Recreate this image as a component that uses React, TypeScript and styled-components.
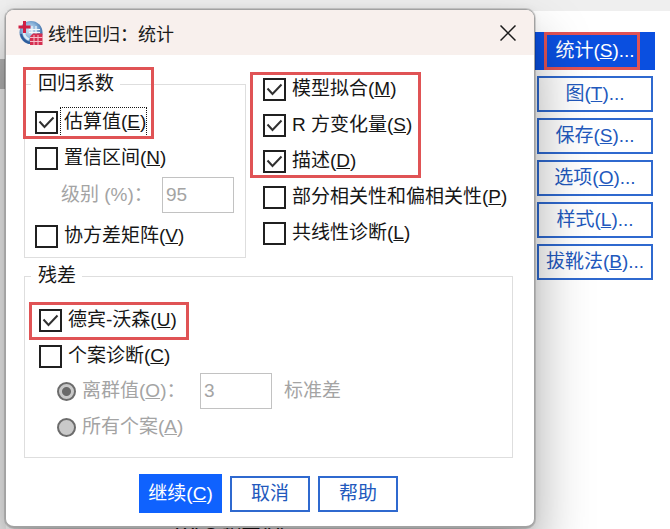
import React, { useState } from "react";
import styled, { createGlobalStyle, css } from "styled-components";

const GlobalStyle = createGlobalStyle`
  *, *::before, *::after { box-sizing: border-box; }
  body {
    margin: 0;
    overflow: hidden;
    background: #ffffff;
    color: #161616;
    font-family: "Liberation Sans", "Noto Sans CJK SC", sans-serif;
    font-size: 19px;
    line-height: 22px;
  }
  button, input { font: inherit; }
`;

const Page = styled.div`
  min-height: 100vh;
  display: grid;
  grid-template-columns: minmax(0, 1fr) 135px;
  grid-template-rows: auto 1fr;
  padding: 9px 0 0 5px;
  overflow: hidden;
  background:
    linear-gradient(#b4b4b4, #b4b4b4) 0 59px / 6px 30px no-repeat,
    linear-gradient(#f0f0f0, #f0f0f0) 0 0 / 6px 100% no-repeat,
    linear-gradient(#efefef 0 11px, #ffffff 11px);
`;

const Dialog = styled.div`
  position: relative;
  z-index: 1;
  border: 1px solid #a2a2a2;
  border-bottom-width: 2px;
  border-radius: 9px;
  background: #ffffff;
  box-shadow: 0 0 0 1px rgba(0, 0, 0, 0.14), 0 32px 56px rgba(0, 0, 0, 0.36),
    0 0 8px rgba(0, 0, 0, 0.06);
`;

const TitleBar = styled.header`
  display: flex;
  align-items: center;
  height: 45px;
  padding: 0 13px 0 12px;
  border-radius: 8px 8px 0 0;
  background: #f8f0ed;
`;

const Title = styled.h1`
  flex: 1;
  margin: 0 0 0 5px;
  font-size: 18px;
  font-weight: 400;
  line-height: 24px;
  color: #1a1a1a;
  font-family: "Noto Sans CJK SC", sans-serif;
`;

const CloseButton = styled.button`
  display: grid;
  place-items: center;
  width: 26px;
  height: 26px;
  padding: 0;
  border: 0;
  background: transparent;
`;

const Body = styled.form`
  padding: 16px 21px 13px 18px;
`;

const Columns = styled.div`
  display: grid;
  grid-template-columns: minmax(0, 222fr) minmax(0, 250fr);
  gap: 17px;
  align-items: start;
`;

const Group = styled.fieldset<{ $spaced?: boolean }>`
  min-width: 0;
  margin: ${(p) => (p.$spaced ? "7px 0 0" : "2px 0 0")};
  padding: 0 10px ${(p) => (p.$spaced ? "12px" : "3px")};
  border: 1px solid #dedede;
`;

const Legend = styled.legend`
  margin-left: -4px;
  padding: 0 6px 0 7px;
`;

const Stack = styled.div<{ $row: number; $top?: number; $left?: number }>`
  display: grid;
  grid-auto-rows: ${(p) => p.$row}px;
  padding-top: ${(p) => p.$top ?? 0}px;
  padding-left: ${(p) => p.$left ?? 0}px;
`;

const Row = styled.div<{ $indent?: number }>`
  display: flex;
  align-items: center;
  height: 36px;
  padding-left: ${(p) => p.$indent ?? 0}px;
  white-space: nowrap;
`;

const Marked = styled.div`
  position: relative;
`;

const frames = {
  coefficients: "-37px 81px 1px -12px",
  fit: "1px 92px 1px -13px",
  durbin: "-3px 313px -1px -10px",
  stats: "0 15px 0 9px",
};

const Frame = styled.span<{ $area: keyof typeof frames }>`
  position: absolute;
  inset: ${(p) => frames[p.$area]};
  border: 3px solid #e05355;
  pointer-events: none;
`;

const CheckLabel = styled.label`
  display: flex;
  align-items: center;
  gap: 2px;
  white-space: nowrap;
`;

const BoxCell = styled.span`
  display: grid;
  width: 23px;
  height: 23px;
  > * {
    grid-area: 1 / 1;
  }
`;

const CheckInput = styled.input`
  appearance: none;
  width: 23px;
  height: 23px;
  margin: 0;
  border: 2px solid #202020;
  background: #ffffff;
  outline: none;
`;

const Caption = styled.span<{ $dotted?: boolean }>`
  padding: 3px 0 3px 3px;
  border: 1px dotted ${(p) => (p.$dotted ? "#161616" : "transparent")};
`;

const RadioLabel = styled.label`
  display: flex;
  align-items: center;
  gap: 6px;
  color: #a4a4a4;
`;

const RadioInput = styled.input`
  appearance: none;
  width: 19px;
  height: 19px;
  margin: 0;
  border: 2px solid #6c6c6c;
  border-radius: 50%;
  background: #c9c9c9;
  &:checked {
    background: radial-gradient(circle, #6a6a6a 0 4px, #c9c9c9 5px);
  }
`;

const Muted = styled.label`
  color: #a4a4a4;
`;

const NumberBox = styled.input`
  width: 72px;
  height: 36px;
  padding: 0 3px;
  border: 1px solid #c2c2c2;
  border-radius: 0;
  background: #ffffff;
  color: #a4a4a4;
`;

const Level = styled(Row)`
  justify-content: space-between;
  height: 38px;
  padding: 0 1px 0 26px;
  margin-bottom: 4px;
`;

const Deviation = styled.div`
  display: flex;
  align-items: center;
  gap: 12px;
`;

const OutlierRow = styled(Row)`
  display: grid;
  grid-template-columns: 143px 1fr;
`;

const Footer = styled.footer`
  display: flex;
  align-items: center;
  justify-content: center;
  gap: 8px;
  margin-top: 16px;
`;

const ActionButton = styled.button<{ $primary?: boolean }>`
  width: 80px;
  height: 36px;
  padding: 0;
  border: 2px solid #2f69cf;
  background: #ffffff;
  color: #2259bd;
  white-space: nowrap;
  ${(p) =>
    p.$primary &&
    css`
      width: 83px;
      height: 39px;
      border-color: #0f62fe;
      background: #0f62fe;
      color: #ffffff;
    `}
`;

const Side = styled.aside`
  display: flex;
  flex-direction: column;
  gap: 6px;
  padding: 23px 15px 0 0;
`;

const SideButton = styled(ActionButton)`
  width: auto;
  margin: 0 2px;
`;

const ActiveSlot = styled(Marked)`
  display: grid;
`;

const ActiveButton = styled(SideButton)`
  height: 38px;
  margin: 0;
  border-color: #0a4fe0;
  background: #0a4fe0;
  color: #ffffff;
`;

const Beneath = styled.div`
  height: 2px;
  padding-left: 171px;
  line-height: 14px;
  white-space: nowrap;
`;

type Entry = { text: string; hotkey: string };

const Key = ({ text, hotkey }: Entry) => (
  <>
    {text}(<u>{hotkey}</u>)
  </>
);

function Check({
  text,
  hotkey,
  initial = false,
  dotted = false,
}: Entry & { initial?: boolean; dotted?: boolean }) {
  const [on, setOn] = useState(initial);
  return (
    <CheckLabel>
      <BoxCell>
        <CheckInput type="checkbox" checked={on} onChange={() => setOn(!on)} />
        {on && (
          <svg width="23" height="23" viewBox="0 0 23 23" fill="none" pointerEvents="none">
            <path d="M4.5 10.5 9.5 16 18.5 6.5" stroke="#303030" strokeWidth="2" />
          </svg>
        )}
      </BoxCell>
      <Caption $dotted={dotted}>
        <Key text={text} hotkey={hotkey} />
      </Caption>
    </CheckLabel>
  );
}

const AppIcon = () => (
  <svg width="25" height="26" viewBox="0 0 25 26" aria-hidden="true">
    <defs>
      <radialGradient id="globe" cx="0.45" cy="0.4" r="0.6">
        <stop offset="0" stopColor="#d6e8f5" />
        <stop offset="0.55" stopColor="#86b0d8" />
        <stop offset="1" stopColor="#34649f" />
      </radialGradient>
    </defs>
    <circle cx="13" cy="12.5" r="11.5" fill="url(#globe)" />
    <path d="M11 9.500h11M11 12.500h11M14 6v8M18 6v8" stroke="#f2f8fc" strokeWidth="1.2" />
    <path d="M3 14q2 7.500 9 9" stroke="#2d5c9c" strokeWidth="2" fill="none" />
    <path d="M6 12.500q0 5 5 7" stroke="#dcebf6" strokeWidth="2.500" fill="none" />
    <path d="M6.500 1v12M0.500 7h12" stroke="#cf1f42" strokeWidth="3" />
    <path d="M12 16.500l3-3h9.500V25H12z" fill="#d52f50" />
    <path d="M12 17.500h12.500M12 21.500h12.500M16 15v10M20 15v10" stroke="#f6bcc8" strokeWidth="1" />
  </svg>
);

const sideItems: Entry[] = [
  { text: "图", hotkey: "T" },
  { text: "保存", hotkey: "S" },
  { text: "选项", hotkey: "O" },
  { text: "样式", hotkey: "L" },
  { text: "拔靴法", hotkey: "B" },
];

export default function App() {
  const [level, setLevel] = useState("95");
  const [deviations, setDeviations] = useState("3");
  return (
    <>
      <GlobalStyle />
      <Page>
        <Dialog role="dialog" aria-labelledby="title">
          <TitleBar>
            <AppIcon />
            <Title id="title">线性回归：统计</Title>
            <CloseButton type="button" aria-label="关闭">
              <svg width="16" height="16" viewBox="0 0 16 16">
                <path d="M.5.5l15 15M15.500.5l-15 15" stroke="#1a1a1a" strokeWidth="1.500" />
              </svg>
            </CloseButton>
          </TitleBar>
          <Body onSubmit={(e) => e.preventDefault()}>
            <Columns>
              <Group>
                <Legend>回归系数</Legend>
                <Stack $row={36} $top={9}>
                  <Marked>
                    <Row>
                      <Check text="估算值" hotkey="E" initial dotted />
                    </Row>
                    <Frame $area="coefficients" />
                  </Marked>
                  <Row>
                    <Check text="置信区间" hotkey="N" />
                  </Row>
                </Stack>
                <Level>
                  <Muted htmlFor="level">级别 (%)：</Muted>
                  <NumberBox
                    id="level"
                    disabled
                    value={level}
                    onChange={(e) => setLevel(e.target.value)}
                  />
                </Level>
                <Row>
                  <Check text="协方差矩阵" hotkey="V" />
                </Row>
              </Group>
              <div>
                <Marked>
                  <Row>
                    <Check text="模型拟合" hotkey="M" initial />
                  </Row>
                  <Row>
                    <Check text="R 方变化量" hotkey="S" initial />
                  </Row>
                  <Row>
                    <Check text="描述" hotkey="D" initial />
                  </Row>
                  <Frame $area="fit" />
                </Marked>
                <Row>
                  <Check text="部分相关性和偏相关性" hotkey="P" />
                </Row>
                <Row>
                  <Check text="共线性诊断" hotkey="L" />
                </Row>
              </div>
            </Columns>
            <Group $spaced>
              <Legend>残差</Legend>
              <Stack $row={34} $top={18} $left={4}>
                <Marked>
                  <Check text="德宾-沃森" hotkey="U" initial />
                  <Frame $area="durbin" />
                </Marked>
                <Check text="个案诊断" hotkey="C" />
              </Stack>
              <OutlierRow $indent={22}>
                <RadioLabel>
                  <RadioInput type="radio" name="cases" defaultChecked disabled />
                  <span>
                    <Key text="离群值" hotkey="O" />：
                  </span>
                </RadioLabel>
                <Deviation>
                  <NumberBox
                    id="deviations"
                    disabled
                    value={deviations}
                    onChange={(e) => setDeviations(e.target.value)}
                  />
                  <Muted htmlFor="deviations">标准差</Muted>
                </Deviation>
              </OutlierRow>
              <Row $indent={22}>
                <RadioLabel>
                  <RadioInput type="radio" name="cases" disabled />
                  <span>
                    <Key text="所有个案" hotkey="A" />
                  </span>
                </RadioLabel>
              </Row>
            </Group>
            <Footer>
              <ActionButton $primary type="submit">
                <Key text="继续" hotkey="C" />
              </ActionButton>
              <ActionButton type="button">取消</ActionButton>
              <ActionButton type="button">帮助</ActionButton>
            </Footer>
          </Body>
        </Dialog>
        <Side>
          <ActiveSlot>
            <ActiveButton type="button">
              <Key text="统计" hotkey="S" />...
            </ActiveButton>
            <Frame $area="stats" />
          </ActiveSlot>
          {sideItems.map((item) => (
            <SideButton type="button" key={item.text}>
              <Key {...item} />
              ...
            </SideButton>
          ))}
        </Side>
        <Beneath>WLS 权重(H):</Beneath>
      </Page>
    </>
  );
}
